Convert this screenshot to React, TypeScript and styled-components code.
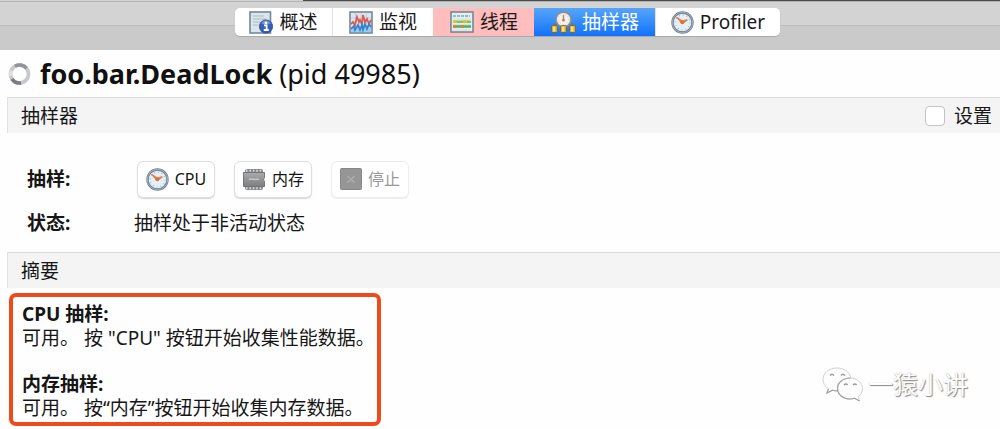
import React from "react";
import styled, { createGlobalStyle } from "styled-components";

const GlobalStyle = createGlobalStyle`
  * { box-sizing: border-box; }
  body {
    margin: 0;
    background: #fefefe;
    color: #161616;
    font: 19px/24px "Noto Sans", "Noto Sans CJK SC", sans-serif;
  }
  button, input { font: inherit; color: inherit; margin: 0; }
  svg { display: block; flex: none; }
`;

const Toolbar = styled.header`
  height: 50px;
  padding-top: 8px;
  display: flex;
  justify-content: center;
  align-items: flex-start;
  padding-left: 15px;
  background:
    linear-gradient(#4a4a4a, #4a4a4a) 303px 0 / 100% 1px no-repeat,
    linear-gradient(#b4b4b4, #b4b4b4) 0 1px / 100% 1px no-repeat,
    linear-gradient(#bcbcbc, #bcbcbc) 0 25px / 100% 1px no-repeat,
    linear-gradient(#d3d3d3 50%, #cacaca 50%);
`;

const TabGroup = styled.nav`
  display: flex;
  height: 28px;
  border-radius: 5px;
  overflow: hidden;
  box-shadow: 0 1px 1px #a8a8a8;
`;

const Tab = styled.button<{ $tone?: "alert" | "active"; $width: number }>`
  width: ${(p) => p.$width}px;
  padding: 0;
  border: 0;
  border-left: 1px solid ${(p) => (p.$tone ? "transparent" : "#e2e2e2")};
  display: flex;
  align-items: center;
  justify-content: center;
  gap: 6px;
  background: ${(p) =>
    p.$tone === "alert" ? "#ffbdbd" : p.$tone === "active" ? "linear-gradient(#55a5f8, #1273fb)" : "#fff"};
  background-origin: border-box;
  color: ${(p) => (p.$tone === "active" ? "#fff" : "#1a1a1a")};
  &:first-child { border-left: 0; }
`;

const Title = styled.h1`
  margin: 0;
  height: 47px;
  padding: 0 8px;
  display: flex;
  align-items: center;
  gap: 9px;
  font-size: 27px;
  line-height: 32px;
  font-weight: 400;
  color: #111;
`;

const SectionBar = styled.div`
  margin-left: 7px;
  height: 36px;
  padding: 0 8px 0 13px;
  display: flex;
  align-items: center;
  justify-content: space-between;
  background: #f4f4f4;
  border-top: 1px solid #dadada;
  border-left: 1px solid #e2e2e2;
`;

const SectionTitle = styled.h2`
  margin: 0;
  font-size: 19px;
  font-weight: 400;
`;

const Setting = styled.label`
  display: flex;
  align-items: center;
  gap: 9px;
`;

const Checkbox = styled.input`
  appearance: none;
  width: 20px;
  height: 20px;
  border: 1px solid #c4c4c4;
  border-radius: 4px;
  background: #fff;
`;

const Controls = styled.div`
  height: 119px;
  padding: 26px 27px 0;
  display: grid;
  grid-template-columns: 107px 1fr;
  grid-template-rows: 40px 48px;
  align-items: center;
`;

const Label = styled.div`
  font-weight: 700;
`;

const Actions = styled.div`
  display: flex;
  gap: 19px;
  padding-left: 3px;
`;

const Action = styled.button`
  width: 78px;
  height: 37px;
  padding: 0;
  display: flex;
  align-items: center;
  justify-content: center;
  gap: 6px;
  border: 1px solid #dedede;
  border-radius: 6px;
  background: #fff;
  box-shadow: 0 1px 1px #d8d8d8;
  font-size: 16px;
  &:disabled {
    color: #999;
    border-color: #ececec;
    box-shadow: 0 1px 1px #eee;
  }
`;

const Summary = styled.div`
  padding: 5px 32px 3px 9px;
  display: flex;
  align-items: center;
  justify-content: space-between;
`;

const Highlight = styled.div`
  width: 372px;
  padding: 5px 0 2px 9px;
  border: 4px solid #ee4a1b;
  border-radius: 7px;
  display: flex;
  flex-direction: column;
  gap: 22px;
  white-space: nowrap;
`;

const Note = styled.p`
  margin: 0;
`;

const Watermark = styled.div`
  display: flex;
  align-items: center;
  gap: 4px;
  padding-top: 48px;
  font-size: 25px;
  line-height: 36px;
  color: #fdfdfd;
  text-shadow: 1px 1px 1px #8a8a8a, 0 0 1px #b4b4b4;
`;

const ClockIcon = () => (
  <svg width="23" height="23" viewBox="0 0 23 23" aria-hidden="true">
    <circle cx="11.5" cy="11.5" r="10" fill="#e4f0f9" stroke="#71808f" strokeWidth="2.4" />
    <circle cx="11.5" cy="11.5" r="10.2" fill="none" stroke="#b3bdc6" strokeWidth="0.8" />
    <circle cx="11.5" cy="11.5" r="7.4" fill="none" stroke="#9fbbd1" strokeWidth="1.2" strokeDasharray="1 2.87" />
    <path d="M5 6.5 L11 13.2 L16.8 9.4 L16 8 L11.5 9.4 L6 5.8 Z" fill="#e5824a" />
    <circle cx="11.3" cy="11.3" r="2" fill="#e06f35" />
  </svg>
);

const OverviewIcon = () => (
  <svg width="24" height="23" viewBox="0 0 24 23" aria-hidden="true">
    <rect x="1" y="1" width="20.5" height="21" fill="#dbe5ea" stroke="#73879b" strokeWidth="1.6" />
    <path d="M4 5h11M4 8h13M4 11h7M4 14h5" stroke="#a9bbc8" strokeWidth="1.1" />
    <circle cx="17" cy="15.5" r="6.6" fill="#3460b8" stroke="#26468c" strokeWidth="0.8" />
    <path d="M12.2 12.5a5.4 5.4 0 0 1 9.6 0q-4.800 2-9.600 0" fill="#6e93d7" />
    <circle cx="17" cy="11.9" r="1.4" fill="#fff" />
    <path d="M15 14.400h2.600v4.400M14.800 19h5" fill="none" stroke="#fff" strokeWidth="1.8" />
  </svg>
);

const MonitorIcon = () => (
  <svg width="24" height="23" viewBox="0 0 24 23" aria-hidden="true">
    <rect x="1" y="1" width="22" height="21" fill="#dbe7ee" stroke="#73879b" strokeWidth="1.6" />
    <path d="M6.5 2v19M12 2v19M17.5 2v19M2 7h20" stroke="#b9cbd6" strokeWidth="0.8" />
    <path d="M2 21V16l3-2 2 3 3-4 3 4 2-5 3 3 2-3 2 2V21Z" fill="#9ccbf2" />
    <path d="M2 13l2-2 2 3 2-8 2 5 1-2 2 4 1-9 2 7 2-3 2 5 2-4" fill="none" stroke="#df5955" strokeWidth="1.8" />
    <path d="M2 18l3-3 1 4 3-5 2 5 2-5 1 5 2-6 2 5 2-5 2 3" fill="none" stroke="#3383cb" strokeWidth="1.7" />
  </svg>
);

const ThreadsIcon = () => (
  <svg width="24" height="22" viewBox="0 0 24 22" aria-hidden="true">
    <rect x="1" y="1" width="22" height="20" fill="#e8eeea" stroke="#73879b" strokeWidth="1.6" />
    <path d="M3 5h17" stroke="#6eafc4" strokeWidth="1.6" strokeDasharray="3 1" />
    <path d="M3 8h18M3 13.5h18M3 19h18" stroke="#d3dcd8" strokeWidth="0.8" />
    <path d="M3 10.8h18" stroke="#7dc56c" strokeWidth="2.4" />
    <path d="M3 10.8h4M13 10.8h4" stroke="#e6b93d" strokeWidth="2.4" />
    <path d="M3 15.500h18" stroke="#4eaf5f" strokeWidth="2.6" />
    <path d="M3 15.500h3M11 15.500h3" stroke="#dd7d3a" strokeWidth="2.6" />
  </svg>
);

const SamplerIcon = () => (
  <svg width="25" height="22" viewBox="0 0 25 22" aria-hidden="true">
    <path d="M4 15V13h17v2M12.5 12v3" fill="none" stroke="#6f7478" strokeWidth="1.6" />
    <circle cx="12.5" cy="8.500" r="7.500" fill="#f2f3f2" stroke="#8b8f92" strokeWidth="1.8" />
    <circle cx="12.5" cy="8.500" r="5.200" fill="none" stroke="#b4c0c8" strokeWidth="1" strokeDasharray="0.8 1.8" />
    <path d="M12.5 4v6" stroke="#c9825f" strokeWidth="1.4" />
    <circle cx="12.5" cy="9" r="1.5" fill="#df7741" />
    {[0.5, 9.5, 18.5].map((x) => (
      <g key={x}>
        <rect x={x} y="14.5" width="6" height="7" rx="1" fill="#e0a730" stroke="#6d5f35" strokeWidth="0.8" />
        <rect x={x + 1.5} y="15.500" width="2.400" height="5" fill="#ffe28a" />
      </g>
    ))}
  </svg>
);

const MemoryIcon = () => (
  <svg width="24" height="23" viewBox="0 0 24 23" aria-hidden="true">
    <defs>
      <linearGradient id="chip" x1="0" y1="0" x2="0" y2="1">
        <stop offset="0" stopColor="#a9abad" />
        <stop offset="1" stopColor="#7c7e80" />
      </linearGradient>
    </defs>
    <rect x="3" y="1" width="18" height="21" rx="2" fill="#85878a" />
    <path d="M4 2.700h17M4 20.300h17" stroke="#d6d8d9" strokeWidth="2" strokeDasharray="1.600 1.800" />
    <path d="M1.500 4.500h21v5q-2 2 0 4v5h-21Z" fill="url(#chip)" stroke="#737577" strokeLinejoin="round" />
    <path d="M7 10.500h10v1.500H7z" fill="#c3c5c7" />
  </svg>
);

const StopIcon = () => (
  <svg width="22" height="22" viewBox="0 0 22 22" aria-hidden="true">
    <rect x="0.5" y="0.5" width="21" height="21" rx="1" fill="#969696" stroke="#878787" />
    <path d="M7.5 8l7 6.5M14.5 8l-7 6.5" stroke="#adadad" strokeWidth="1.5" />
  </svg>
);

const SpinnerIcon = () => (
  <svg width="23" height="24" viewBox="0 0 23 24" aria-hidden="true">
    <g fill="none" strokeWidth="3.6">
      <circle cx="11.5" cy="12" r="9" stroke="#c7c8cb" />
      <path d="M7 4.2A9 9 0 0 1 18.5 6.3" stroke="#93949a" />
      <path d="M4 17A9 9 0 0 0 13 20.9" stroke="#7b7c83" />
      <path d="M3.2 8.5A9 9 0 0 0 2.7 14" stroke="#dedfe2" />
    </g>
  </svg>
);

const WechatIcon = () => (
  <svg width="42" height="36" viewBox="0 0 42 36" aria-hidden="true">
    <g fill="#fdfdfd" stroke="#d2d2d2" strokeWidth="1">
      <path d="M15 2C7 2 1 7 1 13.500c0 4 2 7 5.500 9.200L5 27l5.500-2.800q2.500.8 5 .8C23 25 29 20 29 13.500S23 2 15 2Z" />
      <path d="M28 12c-7 0-12.500 4.500-12.500 10.500S21 33 28 33q2.500 0 4.600-.7L37.500 35l-1.300-4.300c2.700-2 4.300-4.800 4.300-8.200C40.500 16.500 35 12 28 12Z" />
    </g>
    <path
      d="M6.500 22.700L5 27l5.500-2.800q2.500.8 5 .8M28.500 12C21 12 15.500 16.500 15.500 22.500S21 33 28 33q2.500 0 4.600-.7L37.500 35"
      fill="none"
      stroke="#a2a2a2"
      strokeWidth="1.2"
    />
    <path d="M8 9.500q2-2.500 4 0M19 9.500q2-2.500 4 0M22 19q1.800-2 3.600 0M31 19q1.800-2 3.600 0" fill="none" stroke="#9a9a9a" strokeWidth="1.5" />
  </svg>
);

export default function App() {
  return (
    <>
      <GlobalStyle />
      <Toolbar>
        <TabGroup>
          <Tab $width={97}><OverviewIcon />概述</Tab>
          <Tab $width={101}><MonitorIcon />监视</Tab>
          <Tab $width={101} $tone="alert"><ThreadsIcon />线程</Tab>
          <Tab $width={121} $tone="active"><SamplerIcon />抽样器</Tab>
          <Tab $width={125}><ClockIcon />Profiler</Tab>
        </TabGroup>
      </Toolbar>
      <main>
        <Title>
          <SpinnerIcon />
          <span><strong>foo.bar.DeadLock</strong> (pid 49985)</span>
        </Title>
        <SectionBar>
          <SectionTitle>抽样器</SectionTitle>
          <Setting><Checkbox type="checkbox" />设置</Setting>
        </SectionBar>
        <Controls>
          <Label>抽样:</Label>
          <Actions>
            <Action><ClockIcon />CPU</Action>
            <Action><MemoryIcon />内存</Action>
            <Action disabled><StopIcon />停止</Action>
          </Actions>
          <Label>状态:</Label>
          <div>抽样处于非活动状态</div>
        </Controls>
        <SectionBar>
          <SectionTitle>摘要</SectionTitle>
        </SectionBar>
        <Summary>
          <Highlight>
            <Note><strong>CPU 抽样:</strong><br />可用。 按 "CPU" 按钮开始收集性能数据。</Note>
            <Note><strong>内存抽样:</strong><br />可用。 按“内存”按钮开始收集内存数据。</Note>
          </Highlight>
          <Watermark><WechatIcon />一猿小讲</Watermark>
        </Summary>
      </main>
    </>
  );
}
